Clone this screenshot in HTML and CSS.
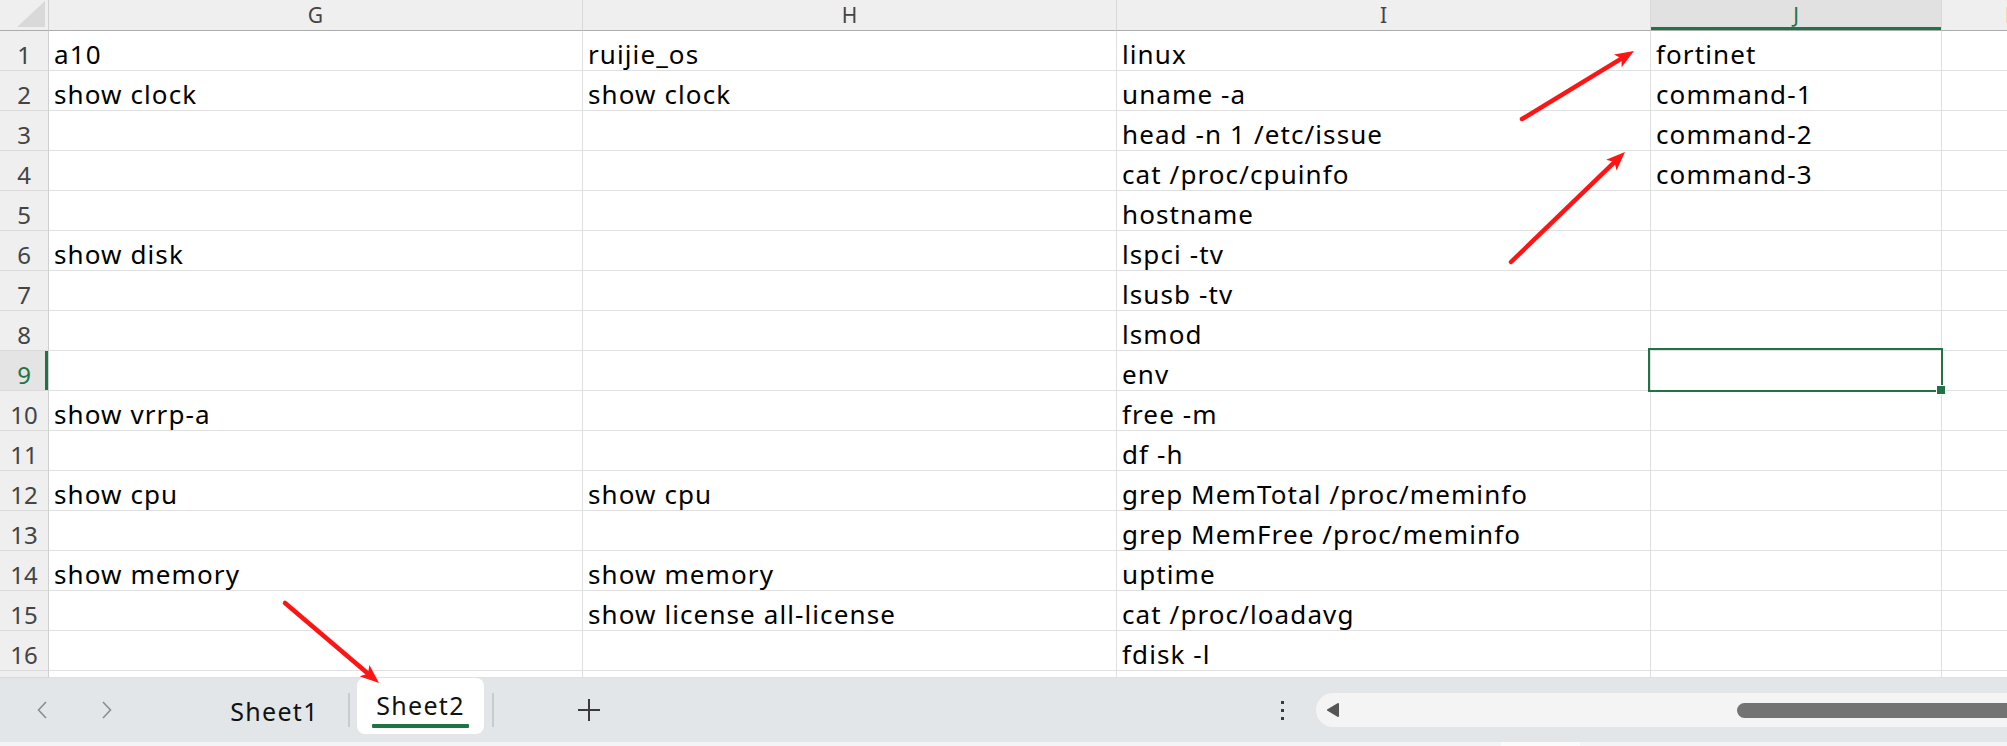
FILE: index.html
```html
<!DOCTYPE html>
<html>
<head>
<meta charset="utf-8">
<link rel="stylesheet" href="styles.css">
</head>
<body>
<div class="sheet">
  <div class="corner"><div class="tri"></div></div>
  <div class="ch">G</div><div class="ch">H</div><div class="ch">I</div><div class="ch ch-sel">J</div><div class="ch">K</div>

  <div class="rh">1</div><div class="c">a10</div><div class="c">ruijie_os</div><div class="c">linux</div><div class="c">fortinet</div><div class="c"></div>
  <div class="rh">2</div><div class="c">show clock</div><div class="c">show clock</div><div class="c">uname -a</div><div class="c">command-1</div><div class="c"></div>
  <div class="rh">3</div><div class="c"></div><div class="c"></div><div class="c">head -n 1 /etc/issue</div><div class="c">command-2</div><div class="c"></div>
  <div class="rh">4</div><div class="c"></div><div class="c"></div><div class="c">cat /proc/cpuinfo</div><div class="c">command-3</div><div class="c"></div>
  <div class="rh">5</div><div class="c"></div><div class="c"></div><div class="c">hostname</div><div class="c"></div><div class="c"></div>
  <div class="rh">6</div><div class="c">show disk</div><div class="c"></div><div class="c">lspci -tv</div><div class="c"></div><div class="c"></div>
  <div class="rh">7</div><div class="c"></div><div class="c"></div><div class="c">lsusb -tv</div><div class="c"></div><div class="c"></div>
  <div class="rh">8</div><div class="c"></div><div class="c"></div><div class="c">lsmod</div><div class="c"></div><div class="c"></div>
  <div class="rh rh-sel">9</div><div class="c"></div><div class="c"></div><div class="c">env</div><div class="c active"><div class="selbox"><div class="handle"></div></div></div><div class="c"></div>
  <div class="rh">10</div><div class="c">show vrrp-a</div><div class="c"></div><div class="c">free -m</div><div class="c"></div><div class="c"></div>
  <div class="rh">11</div><div class="c"></div><div class="c"></div><div class="c">df -h</div><div class="c"></div><div class="c"></div>
  <div class="rh">12</div><div class="c">show cpu</div><div class="c">show cpu</div><div class="c">grep MemTotal /proc/meminfo</div><div class="c"></div><div class="c"></div>
  <div class="rh">13</div><div class="c"></div><div class="c"></div><div class="c">grep MemFree /proc/meminfo</div><div class="c"></div><div class="c"></div>
  <div class="rh">14</div><div class="c">show memory</div><div class="c">show memory</div><div class="c">uptime</div><div class="c"></div><div class="c"></div>
  <div class="rh">15</div><div class="c"></div><div class="c">show license all-license</div><div class="c">cat /proc/loadavg</div><div class="c"></div><div class="c"></div>
  <div class="rh">16</div><div class="c"></div><div class="c"></div><div class="c">fdisk -l</div><div class="c"></div><div class="c"></div>
  <div class="rh"></div><div class="c"></div><div class="c"></div><div class="c"></div><div class="c"></div><div class="c"></div>
</div>

<div class="tabs">
  <svg class="chev chev-l" width="10" height="18" viewBox="0 0 10 18"><path d="M9 1 L1.5 9 L9 17" fill="none" stroke="#8a8d90" stroke-width="1.6"/></svg>
  <svg class="chev chev-r" width="10" height="18" viewBox="0 0 10 18"><path d="M1 1 L8.5 9 L1 17" fill="none" stroke="#8a8d90" stroke-width="1.6"/></svg>
  <div class="tab">Sheet1</div>
  <div class="sep"></div>
  <div class="tab tab-active"><span class="tab-label">Sheet2</span><span class="tab-line"></span></div>
  <div class="sep sep2"></div>
  <svg class="plus" width="22" height="22" viewBox="0 0 22 22"><path d="M11 0 V22 M0 11 H22" stroke="#3a3a3a" stroke-width="2"/></svg>
  <div class="more"><span></span><span></span><span></span></div>
  <div class="track">
    <svg class="tri-l" width="14" height="14" viewBox="0 0 14 14"><path d="M12 1 L2 7 L12 13 Z" fill="#555" stroke="#555" stroke-width="2" stroke-linejoin="round"/></svg>
    <div class="thumb"></div>
  </div>
</div>
<div class="strip"><div class="strip-mark"></div></div>

<svg class="arrows" width="2007" height="746" viewBox="0 0 2007 746">
  <defs>
    <marker id="ah" markerUnits="userSpaceOnUse" markerWidth="20" markerHeight="16" viewBox="0 -8 20 16" refX="9" refY="0" orient="auto">
      <path d="M0 -7.5 L19 0 L0 7.5 L4.5 0 Z" fill="#ff1414"/>
    </marker>
  </defs>
  <line x1="1522" y1="119" x2="1625.4" y2="56.2" stroke="#ff1414" stroke-width="4.5" stroke-linecap="round" marker-end="url(#ah)"/>
  <line x1="1511" y1="262" x2="1617.8" y2="158.9" stroke="#ff1414" stroke-width="4.5" stroke-linecap="round" marker-end="url(#ah)"/>
  <line x1="285" y1="603" x2="371.4" y2="676.5" stroke="#ff1414" stroke-width="4.5" stroke-linecap="round" marker-end="url(#ah)"/>
</svg>
</body>
</html>
```
FILE: styles.css
```css
body {
  margin: 0;
  width: 2007px;
  height: 746px;
  overflow: hidden;
  position: relative;
  background: #fff;
  font-family: "Noto Sans", "Liberation Sans", sans-serif;
}

.sheet {
  display: grid;
  grid-template-columns: 49px 534px 534px 534px 291px 140px;
  grid-template-rows: 31px repeat(16, 40px) 1fr;
  height: 678px;
  width: 2007px;
  overflow: hidden;
}

.corner {
  background: #efefef;
  border-right: 1px solid #d0d0d0;
  border-bottom: 1px solid #acacac;
  box-sizing: border-box;
  position: relative;
}

.tri {
  position: absolute;
  left: 17px;
  top: 1px;
  width: 28px;
  height: 26px;
  background: #d9d9d9;
  clip-path: polygon(0 100%, 100% 100%, 100% 0);
}

.ch {
  box-sizing: border-box;
  background: #efefef;
  border-right: 1px solid #d8d8d8;
  border-bottom: 1px solid #acacac;
  display: flex;
  align-items: center;
  justify-content: center;
  font-size: 21px;
  line-height: 29px;
  color: #444;
}

.ch-sel {
  background: #e1e1e1;
  color: #217346;
  box-shadow: inset 0 -3px 0 #217346;
}

.rh {
  box-sizing: border-box;
  background: #efefef;
  border-right: 1px solid #cfcfcf;
  border-bottom: 1px solid #dadada;
  display: flex;
  align-items: flex-end;
  justify-content: center;
  font-size: 24px;
  line-height: 31px;
  color: #444;
}

.rh-sel {
  background: #e4e4e4;
  color: #217346;
  box-shadow: inset -3px 0 0 #217346;
}

.c {
  box-sizing: border-box;
  border-right: 1px solid #e0e0e0;
  border-bottom: 1px solid #e0e0e0;
  display: flex;
  align-items: flex-end;
  padding-left: 5px;
  font-size: 26px;
  line-height: 31px;
  letter-spacing: 1.1px;
  color: #000;
  white-space: nowrap;
}

.active {
  position: relative;
}

.selbox {
  position: absolute;
  left: -3px;
  top: -3px;
  width: 295px;
  height: 44px;
  box-sizing: border-box;
  border: 2px solid #217346;
}

.handle {
  position: absolute;
  left: 287px;
  top: 36px;
  width: 8px;
  height: 8px;
  background: #217346;
  box-shadow: 0 0 0 1px #fff;
}

.tabs {
  height: 64px;
  background: #e3e6e9;
  display: flex;
  align-items: center;
  overflow: hidden;
}

.chev-l {
  margin-left: 37px;
  flex: none;
}

.chev-r {
  margin-left: 55px;
  flex: none;
}

.tab {
  flex: none;
  width: 127px;
  margin-left: 99px;
  text-align: center;
  font-size: 25px;
  line-height: 30px;
  letter-spacing: 1.3px;
  color: #111;
  padding-top: 2px;
}

.sep {
  flex: none;
  width: 2px;
  height: 34px;
  background: #c9cccf;
  margin-left: 10px;
}

.tab-active {
  margin-left: 7px;
  align-self: flex-start;
  height: 56px;
  box-sizing: border-box;
  background: #fff;
  border-radius: 8px;
  display: flex;
  flex-direction: column;
  align-items: center;
  padding-top: 12px;
}

.tab-label {
  display: block;
  line-height: 30px;
}

.tab-line {
  display: block;
  width: 97px;
  height: 4px;
  margin-top: 4px;
  background: #217346;
  border-radius: 1px;
}

.sep2 {
  margin-left: 8px;
}

.plus {
  flex: none;
  margin-left: 84px;
}

.more {
  flex: none;
  margin-left: 681px;
  width: 3px;
  display: flex;
  flex-direction: column;
  gap: 5px;
}

.more span {
  display: block;
  width: 3px;
  height: 3px;
  background: #3a3a3a;
}

.track {
  flex: none;
  margin-left: 32px;
  width: 760px;
  height: 34px;
  border-radius: 17px;
  background: #f4f4f4;
  display: flex;
  align-items: center;
}

.tri-l {
  flex: none;
  margin-left: 10px;
}

.thumb {
  flex: none;
  margin-left: 397px;
  width: 340px;
  height: 15px;
  border-radius: 8px;
  background: #737373;
}

.strip {
  height: 4px;
  background: #f3f4f5;
  position: relative;
}

.strip-mark {
  margin-left: 1501px;
  width: 79px;
  height: 4px;
  background: #fbfbfb;
}

.arrows {
  position: absolute;
  left: 0;
  top: 0;
  pointer-events: none;
}
```
